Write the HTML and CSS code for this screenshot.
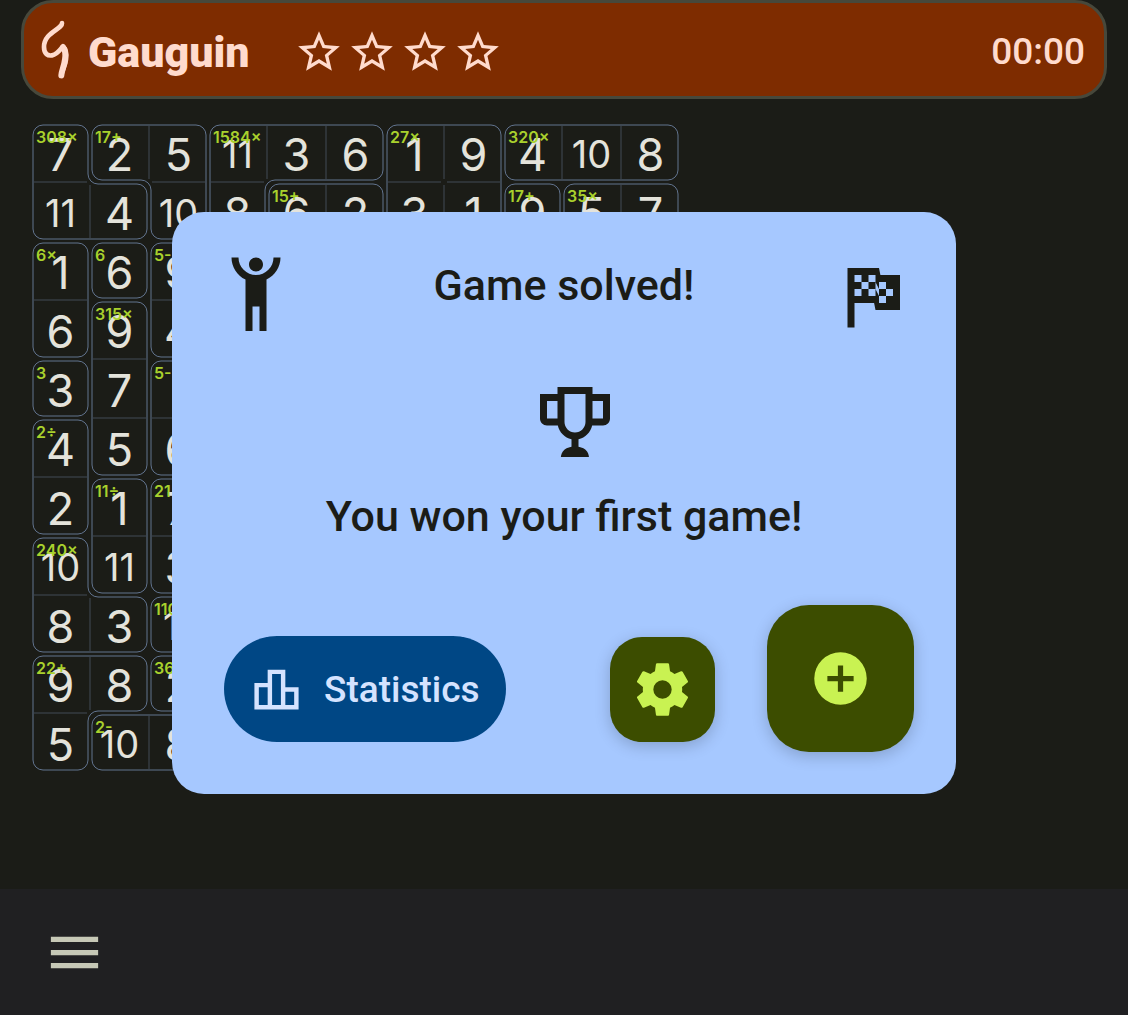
FILE: index.html
```html
<!DOCTYPE html>
<html lang="en">
<head>
<meta charset="utf-8">
<meta name="viewport" content="width=device-width, initial-scale=1">
<title>Gauguin</title>
<link rel="stylesheet" href="styles.css">
</head>
<body>
<header class="topbar">
  <svg class="logo" viewBox="120 60 90 180" aria-hidden="true"><path d="M186 69C187 88 132 97 132 141C132 163 144 168 156 166C172 163 180 149 189 139C198 148 200 163 198 178C195 202 185 210 184 228"/><path class="logo-thick" d="M189 142C196 150 197 165 195 178C192 202 185 210 184 226"/></svg>
  <h1 class="brand">Gauguin</h1>
  <div class="stars" role="img" aria-label="Difficulty">
    <svg viewBox="0 0 24 24"><path d="M12 15.39L8.24 17.66L9.23 13.38L5.91 10.5L10.29 10.13L12 6.09L13.71 10.13L18.09 10.5L14.77 13.38L15.76 17.66M22 9.24L14.81 8.63L12 2L9.19 8.63L2 9.24L7.45 13.97L5.82 21L12 17.27L18.18 21L16.54 13.97L22 9.24Z"/></svg>
    <svg viewBox="0 0 24 24"><path d="M12 15.39L8.24 17.66L9.23 13.38L5.91 10.5L10.29 10.13L12 6.09L13.71 10.13L18.09 10.5L14.77 13.38L15.76 17.66M22 9.24L14.81 8.63L12 2L9.19 8.63L2 9.24L7.45 13.97L5.82 21L12 17.27L18.18 21L16.54 13.97L22 9.24Z"/></svg>
    <svg viewBox="0 0 24 24"><path d="M12 15.39L8.24 17.66L9.23 13.38L5.91 10.5L10.29 10.13L12 6.09L13.71 10.13L18.09 10.5L14.77 13.38L15.76 17.66M22 9.24L14.81 8.63L12 2L9.19 8.63L2 9.24L7.45 13.97L5.82 21L12 17.27L18.18 21L16.54 13.97L22 9.24Z"/></svg>
    <svg viewBox="0 0 24 24"><path d="M12 15.39L8.24 17.66L9.23 13.38L5.91 10.5L10.29 10.13L12 6.09L13.71 10.13L18.09 10.5L14.77 13.38L15.76 17.66M22 9.24L14.81 8.63L12 2L9.19 8.63L2 9.24L7.45 13.97L5.82 21L12 17.27L18.18 21L16.54 13.97L22 9.24Z"/></svg>
  </div>
  <time class="timer">00:00</time>
</header>

<main class="play">
  <div class="board">
    <svg class="cages" viewBox="0 0 649 649" aria-hidden="true">
      <!-- thin dividers between cells of one cage -->
      <path class="divider" d="M3 59H56M118 3V56M121 59H174M180 59H233M236 3V56M295 3V56M59 62V115M357 59H410M416 59H469M413 3V56M413 62V115M531 3V56M590 3V56M295 62V115M590 62V115
        M3 177H56M62 236H115M62 295H115M121 177H174M121 295H174M3 354H56M62 413H115M121 413H174M3 472H56M59 475V528M59 534V587M3 590H56M118 593V646"/>
      <!-- cage outlines -->
      <g class="cage">
        <path d="M12 2H47A10 10 0 0 1 57 12V51A10 10 0 0 0 67 61H106A10 10 0 0 1 116 71V106A10 10 0 0 1 106 116H12A10 10 0 0 1 2 106V12A10 10 0 0 1 12 2Z"/>
        <path d="M71 2H165A10 10 0 0 1 175 12V106A10 10 0 0 1 165 116H130A10 10 0 0 1 120 106V67A10 10 0 0 0 110 57H71A10 10 0 0 1 61 47V12A10 10 0 0 1 71 2Z"/>
        <path d="M189 2H342A10 10 0 0 1 352 12V47A10 10 0 0 1 342 57H244A10 10 0 0 0 234 67V106A10 10 0 0 1 224 116H189A10 10 0 0 1 179 106V12A10 10 0 0 1 189 2Z"/>
        <rect x="356" y="2" width="114" height="114" rx="10"/>
        <rect x="474" y="2" width="173" height="55" rx="10"/>
        <rect x="238" y="61" width="114" height="55" rx="10"/>
        <rect x="474" y="61" width="55" height="55" rx="10"/>
        <rect x="533" y="61" width="114" height="55" rx="10"/>
        <rect x="2" y="120" width="55" height="114" rx="10"/>
        <rect x="61" y="120" width="55" height="55" rx="10"/>
        <rect x="120" y="120" width="55" height="114" rx="10"/>
        <rect x="61" y="179" width="55" height="173" rx="10"/>
        <rect x="2" y="238" width="55" height="55" rx="10"/>
        <rect x="120" y="238" width="55" height="114" rx="10"/>
        <rect x="2" y="297" width="55" height="114" rx="10"/>
        <rect x="61" y="356" width="55" height="114" rx="10"/>
        <rect x="120" y="356" width="55" height="114" rx="10"/>
        <path d="M12 415H47A10 10 0 0 1 57 425V464A10 10 0 0 0 67 474H106A10 10 0 0 1 116 484V519A10 10 0 0 1 106 529H12A10 10 0 0 1 2 519V425A10 10 0 0 1 12 415Z"/>
        <rect x="120" y="474" width="55" height="55" rx="10"/>
        <path d="M12 533H106A10 10 0 0 1 116 543V578A10 10 0 0 1 106 588H67A10 10 0 0 0 57 598V637A10 10 0 0 1 47 647H12A10 10 0 0 1 2 637V543A10 10 0 0 1 12 533Z"/>
        <rect x="120" y="533" width="55" height="55" rx="10"/>
        <rect x="61" y="592" width="114" height="55" rx="10"/>
      </g>
    </svg>
    <div class="cells">
      <div class="row"><div class="cell"><b>7</b><i>308×</i></div><div class="cell"><b>2</b><i>17+</i></div><div class="cell"><b>5</b></div><div class="cell wide"><b>11</b><i>1584×</i></div><div class="cell"><b>3</b></div><div class="cell"><b>6</b></div><div class="cell"><b>1</b><i>27×</i></div><div class="cell"><b>9</b></div><div class="cell"><b>4</b><i>320×</i></div><div class="cell wide"><b>10</b></div><div class="cell"><b>8</b></div></div>
      <div class="row"><div class="cell wide"><b>11</b></div><div class="cell"><b>4</b></div><div class="cell wide"><b>10</b></div><div class="cell"><b>8</b></div><div class="cell"><b>6</b><i>15+</i></div><div class="cell"><b>2</b></div><div class="cell"><b>3</b></div><div class="cell"><b>1</b></div><div class="cell"><b>9</b><i>17+</i></div><div class="cell"><b>5</b><i>35×</i></div><div class="cell"><b>7</b></div></div>
      <div class="row"><div class="cell"><b>1</b><i>6×</i></div><div class="cell"><b>6</b><i>6</i></div><div class="cell"><b>9</b><i>5-</i></div></div>
      <div class="row"><div class="cell"><b>6</b></div><div class="cell"><b>9</b><i>315×</i></div><div class="cell"><b>4</b></div></div>
      <div class="row"><div class="cell"><b>3</b><i>3</i></div><div class="cell"><b>7</b></div><div class="cell"><i>5-</i></div></div>
      <div class="row"><div class="cell"><b>4</b><i>2÷</i></div><div class="cell"><b>5</b></div><div class="cell"><b>6</b></div></div>
      <div class="row"><div class="cell"><b>2</b></div><div class="cell"><b>1</b><i>11÷</i></div><div class="cell"><b>7</b><i>21×</i></div></div>
      <div class="row"><div class="cell wide"><b>10</b><i>240×</i></div><div class="cell wide"><b>11</b></div><div class="cell"><b>3</b></div></div>
      <div class="row"><div class="cell"><b>8</b></div><div class="cell"><b>3</b></div><div class="cell wide"><b>11</b><i>110×</i></div></div>
      <div class="row"><div class="cell"><b>9</b><i>22+</i></div><div class="cell"><b>8</b></div><div class="cell"><b>2</b><i>36×</i></div></div>
      <div class="row"><div class="cell"><b>5</b></div><div class="cell wide"><b>10</b><i>2-</i></div><div class="cell"><b>8</b></div></div>
    </div>
  </div>
</main>

<footer class="bottombar">
  <button class="menu" type="button" aria-label="Menu"><svg viewBox="0 0 24 24"><path d="M3 6H21V8H3V6M3 11H21V13H3V11M3 16H21V18H3V16Z"/></svg></button>
</footer>

<div class="overlay">
  <section class="dialog" role="dialog" aria-labelledby="solved">
    <div class="dialog-head">
      <svg class="figure" viewBox="0 0 24 24" aria-hidden="true"><path d="M5 1C5 3.7 6.56 6.16 9 7.32V22H11V15H13V22H15V7.31C17.44 6.16 19 3.7 19 1H17A5 5 0 0 1 12 6A5 5 0 0 1 7 1M12 1C10.89 1 10 1.89 10 3C10 4.11 10.89 5 12 5C13.11 5 14 4.11 14 3C14 1.89 13.11 1 12 1Z"/></svg>
      <h2 class="headline" id="solved">Game solved!</h2>
      <svg class="figure" viewBox="0 0 24 24" aria-hidden="true"><path d="M14.4 6H20V16H13L12.6 14H7V21H5V4H14L14.4 6M14 14H16V12H18V10H16V8H14V10L13 8V6H11V8H9V6H7V8H9V10H7V12H9V10H11V12H13V10L14 12V14M11 10V8H13V10H11M14 10H16V12H14V10Z"/></svg>
    </div>
    <div class="award">
      <svg class="figure trophy" viewBox="0 0 24 24" aria-hidden="true"><path d="M17 4V2H7V4H2V11C2 12.1 2.9 13 4 13H7.1C7.5 14.96 9.04 16.5 11 16.9V19.08C8 19.54 8 22 8 22H16C16 22 16 19.54 13 19.08V16.9C14.96 16.5 16.46 14.96 16.9 13H20C21.1 13 22 12.1 22 11V4H17M4 11V6H7V11H4M15 12C15 13.65 13.65 15 12 15C10.35 15 9 13.65 9 12V4H15V12M20 11H17V6H20V11Z"/></svg>
      <p class="headline">You won your first game!</p>
    </div>
    <div class="actions">
      <button class="stats" type="button"><svg viewBox="0 0 24 24" aria-hidden="true"><path d="M16 11V3H8V9H2V21H22V11H16ZM10 5H14V19H10V5ZM4 11H8V19H4V11ZM20 19H16V13H20V19Z"/></svg>Statistics</button>
      <button class="fab fab-small" type="button" aria-label="Settings"><svg viewBox="0 0 24 24"><path d="M12 15.5A3.5 3.5 0 0 1 8.5 12A3.5 3.5 0 0 1 12 8.5A3.5 3.5 0 0 1 15.5 12A3.5 3.5 0 0 1 12 15.5M19.43 12.97C19.47 12.65 19.5 12.33 19.5 12C19.5 11.67 19.47 11.34 19.43 11L21.54 9.37C21.73 9.22 21.78 8.95 21.66 8.73L19.66 5.27C19.54 5.05 19.27 4.96 19.05 5.05L16.56 6.05C16.04 5.66 15.5 5.32 14.87 5.07L14.5 2.42C14.46 2.18 14.25 2 14 2H10C9.75 2 9.54 2.18 9.5 2.42L9.13 5.07C8.5 5.32 7.96 5.66 7.44 6.05L4.95 5.05C4.73 4.96 4.46 5.05 4.34 5.27L2.34 8.73C2.21 8.95 2.27 9.22 2.46 9.37L4.57 11C4.53 11.34 4.5 11.67 4.5 12C4.5 12.33 4.53 12.65 4.57 12.97L2.46 14.63C2.27 14.78 2.21 15.05 2.34 15.27L4.34 18.73C4.46 18.95 4.73 19.03 4.95 18.95L7.44 17.94C7.96 18.34 8.5 18.68 9.13 18.93L9.5 21.58C9.54 21.82 9.75 22 10 22H14C14.25 22 14.46 21.82 14.5 21.58L14.87 18.93C15.5 18.67 16.04 18.34 16.56 17.94L19.05 18.95C19.27 19.03 19.54 18.95 19.66 18.73L21.66 15.27C21.78 15.05 21.73 14.78 21.54 14.63L19.43 12.97Z"/></svg></button>
      <button class="fab fab-large" type="button" aria-label="New game"><svg viewBox="0 0 24 24"><path d="M17 13H13V17H11V13H7V11H11V7H13V11H17M12 2A10 10 0 0 0 2 12A10 10 0 0 0 12 22A10 10 0 0 0 22 12A10 10 0 0 0 12 2Z"/></svg></button>
    </div>
  </section>
</div>
</body>
</html>
```
FILE: styles.css
```css
* { box-sizing: border-box; }

body {
  margin: 0;
  min-height: 100vh;
  display: flex;
  flex-direction: column;
  background: #1b1c17;
  font-family: Roboto, "Liberation Sans", sans-serif;
}

svg { display: block; fill: currentColor; }
h1, h2, p { margin: 0; }

button {
  border: 0;
  padding: 0;
  font: inherit;
  display: flex;
  align-items: center;
  justify-content: center;
}

/* top bar */
.topbar {
  display: flex;
  align-items: center;
  margin: 0 21px;
  padding: 20px 19px 16px 16px;
  min-height: 99px;
  border: 3px solid #47483b;
  border-radius: 32px;
  background: #7e2c00;
  color: #ffdbcd;
}

.logo {
  width: 30px;
  height: 60px;
  margin: -8px 18px -4px 0;
  fill: none;
  stroke: currentColor;
  stroke-width: 14;
  stroke-linecap: round;
  stroke-linejoin: round;
}

.logo-thick { stroke-width: 18; }

.brand { font-size: 43px; line-height: 48px; font-weight: 900; }

.stars { display: flex; gap: 3px; margin-left: 44px; }
.stars svg { width: 50px; height: 50px; }

.timer { margin-left: auto; font-size: 37px; line-height: 48px; font-weight: 500; }

/* board */
.play { flex: 1; padding: 24px 31px; }

.board { display: grid; width: 649px; }
.cages, .cells { grid-area: 1 / 1; }
.cages { width: 100%; fill: none; }
.divider { stroke: #434a57; stroke-width: 1; }
.cage { stroke: #62748f; stroke-width: 1; }

.row { display: flex; }

.cell {
  display: grid;
  width: 59px;
  height: 59px;
  font-family: Inter, "Liberation Sans", sans-serif;
}

.cell b, .cell i { grid-area: 1 / 1; font-style: normal; }

.cell b {
  justify-self: center;
  padding-top: 2px;
  font-size: 45px;
  line-height: 59px;
  font-weight: 400;
  color: #e4e3db;
}

.wide b { font-size: 38px; }

.cell i {
  padding: 4px 0 0 5px;
  font-size: 16px;
  line-height: 20px;
  font-weight: 600;
  color: #a9d12d;
}

/* bottom bar */
.bottombar {
  display: flex;
  align-items: center;
  height: 126px;
  padding: 0 43px;
  background: #202022;
}

.menu { background: none; color: #c6c8b6; }
.menu svg { width: 63px; height: 63px; }

/* dialog */
.overlay {
  position: fixed;
  inset: 0;
  display: grid;
  place-items: center;
  padding: 0 16px 9px;
}

.dialog {
  width: 100%;
  max-width: 784px;
  padding: 42px;
  border-radius: 32px;
  background: #a6c8ff;
  color: #1b1c17;
}

.dialog-head { display: flex; justify-content: space-between; }
.figure { width: 84px; height: 84px; }
.headline { font-size: 43px; line-height: 62px; font-weight: 500; text-align: center; }

.award {
  display: flex;
  flex-direction: column;
  align-items: center;
  gap: 21px;
  padding: 42px 0 58px;
}

.trophy { margin-left: 22px; }

.actions { display: flex; align-items: flex-end; padding-left: 10px; }

.stats {
  gap: 21px;
  height: 106px;
  margin-bottom: 10px;
  padding: 0 26px;
  border-radius: 53px;
  background: #004785;
  color: #d5e3ff;
  font-size: 37px;
  font-weight: 500;
}

.stats svg { width: 53px; height: 53px; }

.fab {
  background: #3c4d00;
  color: #c9f252;
  box-shadow: 0 4px 16px rgba(0, 0, 0, .2);
}

.fab svg { width: 63px; height: 63px; }

.fab-small {
  width: 105px;
  height: 105px;
  margin: 0 52px 10px auto;
  border-radius: 32px;
}

.fab-large { width: 147px; height: 147px; border-radius: 42px; }
```
